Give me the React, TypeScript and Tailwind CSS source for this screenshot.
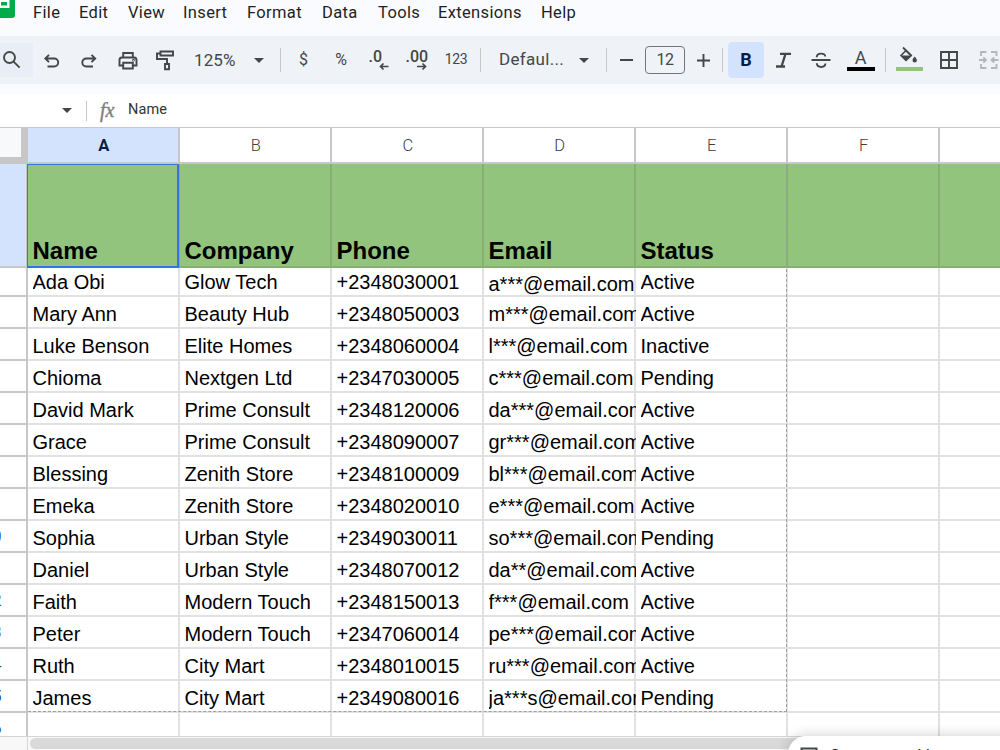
import type { ReactNode } from "react";

const menus = [
  { label: "File", width: "w-[46px]" },
  { label: "Edit", width: "w-[49px]" },
  { label: "View", width: "w-[55px]" },
  { label: "Insert", width: "w-[64px]" },
  { label: "Format", width: "w-[75px]" },
  { label: "Data", width: "w-[56px]" },
  { label: "Tools", width: "w-[60px]" },
  { label: "Extensions", width: "w-[103px]" },
  { label: "Help", width: "w-[50px]" },
];

const columns = ["A", "B", "C", "D", "E", "F", ""];
const headings = ["Name", "Company", "Phone", "Email", "Status", "", ""];

const contacts = [
  ["Ada Obi", "Glow Tech", "+2348030001", "a***@email.com", "Active"],
  ["Mary Ann", "Beauty Hub", "+2348050003", "m***@email.com", "Active"],
  ["Luke Benson", "Elite Homes", "+2348060004", "l***@email.com", "Inactive"],
  ["Chioma", "Nextgen Ltd", "+2347030005", "c***@email.com", "Pending"],
  ["David Mark", "Prime Consult", "+2348120006", "da***@email.com", "Active"],
  ["Grace", "Prime Consult", "+2348090007", "gr***@email.com", "Active"],
  ["Blessing", "Zenith Store", "+2348100009", "bl***@email.com", "Active"],
  ["Emeka", "Zenith Store", "+2348020010", "e***@email.com", "Active"],
  ["Sophia", "Urban Style", "+2349030011", "so***@email.com", "Pending"],
  ["Daniel", "Urban Style", "+2348070012", "da**@email.com", "Active"],
  ["Faith", "Modern Touch", "+2348150013", "f***@email.com", "Active"],
  ["Peter", "Modern Touch", "+2347060014", "pe***@email.com", "Active"],
  ["Ruth", "City Mart", "+2348010015", "ru***@email.com", "Active"],
  ["James", "City Mart", "+2349080016", "ja***s@email.com", "Pending"],
];

const Slot = ({ className, children }: { className: string; children?: ReactNode }) => (
  <div className={`flex h-9 shrink-0 items-center justify-center ${className}`}>{children}</div>
);

const Divider = () => <div className="h-6 w-px shrink-0 bg-[#c4c7c5]" />;

const Icon = ({ children, className = "text-[#444746]" }: { children: ReactNode; className?: string }) => (
  <svg
    width="24"
    height="24"
    viewBox="0 0 24 24"
    fill="none"
    stroke="currentColor"
    strokeWidth="1.9"
    className={`shrink-0 ${className}`}
  >
    {children}
  </svg>
);

const Caret = () => (
  <svg width="10" height="5" viewBox="0 0 10 5" className="shrink-0">
    <path d="M0 0h10L5 5z" fill="#444746" />
  </svg>
);

const MenuBar = () => (
  <div className="flex h-9 items-start bg-[#f9fbfe]">
    <svg width="33" height="20" viewBox="0 0 33 20" className="shrink-0">
      <path d="M0 0h15v15a3 3 0 0 1-3 3H0z" fill="#00ac47" />
      <path d="M0 0h9.500v8H0z" fill="#fff" />
      <path d="M1 2h6v3.500H1z" fill="#00ac47" />
    </svg>
    {menus.map((m) => (
      <div key={m.label} className={`shrink-0 pt-px text-[16.500px] leading-6 text-[#1f1f1f] tracking-[0.350px] ${m.width}`}>
        {m.label}
      </div>
    ))}
  </div>
);

const Toolbar = () => (
  <div className="flex h-12 items-center overflow-hidden bg-[#eff3f8] font-medium text-[#444746]">
    <div className="mt-[-1px] flex h-[34px] w-[33px] shrink-0 items-center bg-[#e9eef6]">
      <Icon className="text-[#444746]">
        <circle cx="9.500" cy="9.500" r="5.500" />
        <path d="M13.600 13.600l6 6" />
      </Icon>
    </div>
    <Slot className="w-[37px]">
      <Icon>
        <path d="M9 6.800L5.300 10.500 9 14.200M5.500 10.500h8.700a4 4 0 0 1 0 8H7.500" />
      </Icon>
    </Slot>
    <Slot className="w-[37px]">
      <Icon>
        <path d="M14.500 6.800l3.700 3.700-3.700 3.700M18 10.500H9.300a4 4 0 0 0 0 8H16" />
      </Icon>
    </Slot>
    <Slot className="w-[41px]">
      <Icon>
        <path d="M7.200 9V5h9.600v4M7 17.500H3.500V12a2.500 2.500 0 0 1 2.500-2.500h12a2.500 2.500 0 0 1 2.500 2.500v5.500H17M7.200 14.800h9.600v5.700H7.200z" />
        <circle cx="17.500" cy="12.200" r="0.400" />
      </Icon>
    </Slot>
    <Slot className="w-[33px]">
      <Icon>
        <path d="M7.500 3.500h12.500v4h-12.500zM7.500 5.500h-3.500v5.500H14v5" />
        <path d="M12 16h4v5.300h-4z" />
      </Icon>
    </Slot>
    <div className="mt-px ml-[13px] w-[60px] shrink-0 text-[17px] font-normal tracking-[0.100px]">125%</div>
    <Caret />
    <div className="w-[16px] shrink-0" />
    <Divider />
    <Slot className="ml-[4px] w-[37px] text-[16px] font-normal">$</Slot>
    <Slot className="w-[38px] text-[16px] font-normal">%</Slot>
    <Slot className="w-[38px]">
      <svg width="24" height="26" viewBox="0 0 24 26">
        <text x="1.500" y="15" fontSize="16" fontWeight="500" fill="#444746">.0</text>
        <path d="M21.500 19.500h-8M16.500 16.500l-3 3 3 3" fill="none" stroke="#444746" strokeWidth="1.700" />
      </svg>
    </Slot>
    <Slot className="w-[38px]">
      <svg width="26" height="26" viewBox="0 0 26 26">
        <text x="1.500" y="15" fontSize="16" fontWeight="500" fill="#444746">.00</text>
        <path d="M13 19.500h8.500M18.500 16.500l3 3-3 3" fill="none" stroke="#444746" strokeWidth="1.700" />
      </svg>
    </Slot>
    <Slot className="w-[40px] pb-px text-[14px] font-normal tracking-[-0.300px]">123</Slot>
    <div className="w-[4px] shrink-0" />
    <Divider />
    <div className="mb-px ml-[18px] w-[80px] shrink-0 text-[17px] font-normal tracking-[0.300px]">Defaul...</div>
    <Caret />
    <div className="w-[17px] shrink-0" />
    <Divider />
    <Slot className="w-[38px]">
      <div className="h-[2px] w-[13px] bg-[#444746]" />
    </Slot>
    <div className="flex h-[28px] w-[40px] shrink-0 items-center justify-center rounded-[4px] border border-[#747775] pb-px text-[16px] font-normal tracking-[-0.400px]">
      12
    </div>
    <Slot className="w-[36px]">
      <svg width="13" height="13" viewBox="0 0 13 13">
        <path d="M0 6.500h13M6.500 0v13" stroke="#444746" strokeWidth="1.900" />
      </svg>
    </Slot>
    <div className="w-px shrink-0" />
    <Divider />
    <div className="ml-[5px] flex h-9 w-9 shrink-0 items-center justify-center rounded-[4px] bg-[#d3e3fd] pb-px text-[18px] font-bold text-[#041e49]">
      B
    </div>
    <Slot className="w-[38px]">
      <Icon>
        <path d="M9 5.800h11M5 18.500h9M14.500 5.800l-4 12.700" strokeWidth="2.300" />
      </Icon>
    </Slot>
    <Slot className="w-[38px]">
      <Icon>
        <path d="M2.500 12h19M7.700 9.300c0-4.800 8.300-4.600 8.500-.8M7.800 15.300c.3 5 8.600 4.600 8.600.3" />
      </Icon>
    </Slot>
    <div className="ml-[7px] flex h-9 w-[28px] shrink-0 flex-col items-center">
      <span className="-ml-px h-[25px] text-[18px] leading-[32px] font-normal">A</span>
      <div className="h-1 w-full bg-black" />
    </div>
    <div className="w-[10px] shrink-0" />
    <Divider />
    <div className="ml-[10px] flex h-9 w-[27px] shrink-0 flex-col items-center">
      <svg width="27" height="25" viewBox="0 0 27 25">
        <path d="M7 5.500l8.500 8.500" stroke="#444746" strokeWidth="1.800" />
        <path d="M10 8.500L5 13.500l5 5 5.200-5z" fill="none" stroke="#444746" strokeWidth="1.600" />
        <path d="M4.800 13.500h10.400L10 18.800z" fill="#444746" />
        <path d="M18.700 14.500s-2.200 2.300-2.200 3.700a2.200 2.200 0 0 0 4.400 0c0-1.400-2.200-3.700-2.200-3.700z" fill="#444746" />
      </svg>
      <div className="h-1 w-full bg-[#93c47d]" />
    </div>
    <Slot className="ml-[7px] w-[38px]">
      <Icon>
        <path d="M4 4h16v16H4zM12 4v16M4 12h16" />
      </Icon>
    </Slot>
    <Slot className="ml-[1px] w-[38px]">
      <Icon className="text-[#b5b8ba]">
        <path d="M10.500 4H5v4M5 16v4h5.500M15 4h5.500v4M20.500 16v4H15M3 12h7M7.300 9.300L10 12l-2.700 2.700M22.500 12h-7M18.200 9.300L15.500 12l2.700 2.700" />
      </Icon>
    </Slot>
  </div>
);

const FormulaBar = () => (
  <div className="flex h-[34px] items-center border-b border-[#c7c7c7] bg-white pl-[62px]">
    <Caret />
    <div className="ml-[14px] h-5 w-px bg-[#c7c7c7]" />
    <div className="mb-[2px] ml-[13px] w-[28px] font-['Liberation_Serif',serif] text-[20px] leading-6 text-[#808080] italic [-webkit-text-stroke:0.400px_#808080]">
      fx
    </div>
    <div className="mb-[2px] text-[14.500px] tracking-[0.100px] text-[#333]">Name</div>
  </div>
);

const RowNumber = ({ value }: { value: number }) => (
  <div className="flex w-7 shrink-0 items-center overflow-hidden border-r-2 border-b-2 border-[#c7c7c7]">
    <span className="-ml-[41.500px] w-[68px] shrink-0 pt-[2px] text-center text-[16px] text-[#1f4f9a]">{value}</span>
  </div>
);

const cell = "w-[152px] shrink-0 border-r-2 border-b-2 border-[#e1e1e1] pl-[4.500px] whitespace-pre";

const Grid = () => (
  <div className="relative h-[608px] overflow-hidden bg-white">
    <div className="flex h-9">
      <div className="w-7 shrink-0 bg-[#c7c7c7]">
        <div className="h-[29px] w-[21px] bg-[#f8f9fa]" />
      </div>
      {columns.map((c, i) => (
        <div
          key={i}
          className={`flex w-[152px] shrink-0 items-center justify-center border-r-2 border-b-2 border-[#c7c7c7] pt-[2px] pl-[1.500px] text-[16.500px] ${
            i === 0 ? "bg-[#d3e3fd] font-bold text-[#041e49]" : "font-light text-[#3c4043]"
          }`}
        >
          {c}
        </div>
      ))}
    </div>

    <div className="flex h-[104px]">
      <div className="w-7 shrink-0 border-r-2 border-b-2 border-[#c7c7c7] bg-[#d3e3fd]" />
      {headings.map((h, i) => (
        <div
          key={i}
          className="flex w-[152px] shrink-0 items-end border-r-2 border-b-2 border-[#84b070] bg-[#93c47d] pl-[4.500px] font-['Liberation_Sans',Arial,sans-serif] text-[24px] leading-[30px] font-bold text-black"
        >
          {h}
        </div>
      ))}
    </div>

    {contacts.map((row, r) => (
      <div key={row[0]} className={`flex ${r === 0 ? "h-[29px]" : "h-8"}`}>
        <RowNumber value={r + 2} />
        {columns.map((_, c) => (
          <div
            key={c}
            className={`${cell} flex items-end font-['Liberation_Sans',Arial,sans-serif] text-[20px] leading-[24px] text-black`}
          >
            {/* long values are cut at the outer side of the grid line */}
            <span
              className={`w-[147.500px] shrink-0 overflow-hidden ${r === 0 && c === 3 ? "-mb-px" : "mb-px"}`}
            >
              {row[c]}
            </span>
          </div>
        ))}
      </div>
    ))}

    <div className="flex h-8">
      <RowNumber value={16} />
      {columns.map((_, c) => (
        <div key={c} className={cell} />
      ))}
    </div>

    {/* selected cell + edge of the data range */}
    <div className="absolute top-[36px] left-[27px] h-[104px] w-[152px] border border-r-2 border-b-2 border-[#3472e8]" />
    <div className="absolute top-[36px] left-[786px] h-[548px] border-l border-dashed border-[#a0a0a0]" />
    <div className="absolute top-[583px] left-[28px] w-[759px] border-t border-dashed border-[#a0a0a0]" />
  </div>
);

const App = () => (
  <div className="relative h-[750px] w-[1000px] overflow-hidden bg-white font-[Roboto,sans-serif]">
    <MenuBar />
    <Toolbar />
    <div className="h-[10px] bg-[#f9fbfe]" />
    <FormulaBar />
    <Grid />
    <div className="flex h-[14px] border-t border-[#d5d5d5] bg-[#f8f8f8]">
      <div className="w-7 shrink-0 border-r border-[#d5d5d5]" />
      <div className="mt-px ml-[2px] h-[11px] w-[860px] rounded-full bg-[#d9d9d9]" />
    </div>

    <div className="absolute top-[736px] left-[788px] flex h-[48px] w-[240px] rounded-[18px] bg-white pl-[12px] shadow-[0_0_14px_rgba(0,0,0,0.2)]">
      <svg width="18" height="18" viewBox="0 0 18 18" className="mt-[11px]">
        <path d="M1.500 1.500h15v15h-15zM1.500 6h15" fill="none" stroke="#444746" strokeWidth="2" />
      </svg>
      <span className="mt-[7px] ml-[12px] text-[15.500px] leading-6 tracking-[-0.100px] text-[#1f1f1f]">Convert to table</span>
    </div>
  </div>
);

export default App;
